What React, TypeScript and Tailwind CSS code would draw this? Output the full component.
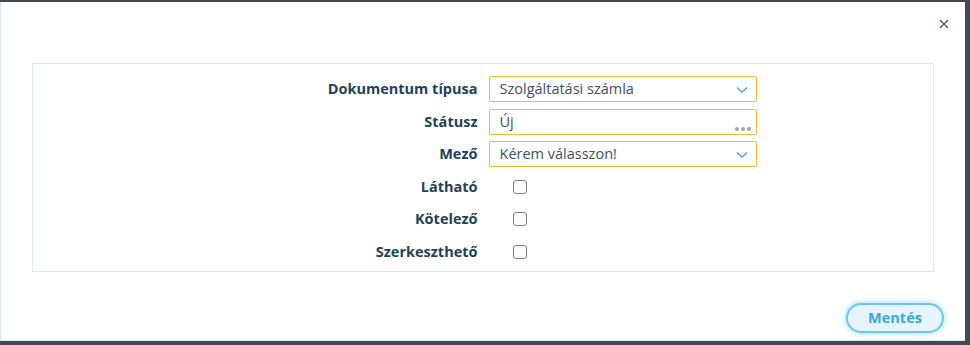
import React from "react"

const font = { fontFamily: '"Open Sans", "Noto Sans", sans-serif' }

function Chevron() {
  return (
    <svg width="12" height="8" viewBox="0 0 12 8" className="absolute right-[8px] top-[9px]">
      <path d="M1 1.5 L6 6 L11 1.5" fill="none" stroke="#4aa3df" strokeWidth="1.4" />
    </svg>
  )
}

function Dots() {
  return (
    <div className="absolute right-[5px] bottom-[3px] flex gap-[2px]">
      <span className="w-[4px] h-[4px] rounded-full bg-[#9aa5ad]" />
      <span className="w-[4px] h-[4px] rounded-full bg-[#9aa5ad]" />
      <span className="w-[4px] h-[4px] rounded-full bg-[#9aa5ad]" />
    </div>
  )
}

function Field({ value, kind }: { value: string; kind: "select" | "lookup" }) {
  return (
    <div className="relative w-[268px] h-[26px] border border-[#f5b82e] rounded-[2px] bg-white pl-[10px] flex items-center text-[14.5px] text-[#3d5260]">
      {value}
      {kind === "select" ? <Chevron /> : <Dots />}
    </div>
  )
}

function Checkbox() {
  return <div className="ml-[24px] w-[14px] h-[14px] rounded-[3px] border border-[#7a7a7a] bg-white" />
}

export default function App() {
  const inputs = [
    { label: "Dokumentum típusa", value: "Szolgáltatási számla", kind: "select" as const },
    { label: "Státusz", value: "Új", kind: "lookup" as const },
    { label: "Mező", value: "Kérem válasszon!", kind: "select" as const },
  ]
  const checks = ["Látható", "Kötelező", "Szerkeszthető"]

  return (
    <div className="w-[970px] h-[345px] bg-[#3e4b52] pt-[2px]" style={font}>
      <div className="w-[965px] h-[339px] bg-white border-l border-b border-[#dbe5ee] flex flex-col">
        <div className="h-[61px] flex justify-end pr-[14px] pt-[15px]">
          <svg width="14" height="14" viewBox="0 0 14 14">
            <path d="M3 3 L11 11 M11 3 L3 11" stroke="#3f5966" strokeWidth="1.3" />
          </svg>
        </div>
        <div className="mx-[31px] border border-[#dfe6ec] pt-[12px] pb-[6px] grid grid-cols-2 gap-x-[11px] gap-y-[6.5px]">
          {inputs.map((r) => (
            <React.Fragment key={r.label}>
              <div className="h-[26px] flex items-center justify-end text-[14.5px] font-bold text-[#1f4256]">{r.label}</div>
              <div className="h-[26px] flex items-center">
                <Field value={r.value} kind={r.kind} />
              </div>
            </React.Fragment>
          ))}
          {checks.map((c) => (
            <React.Fragment key={c}>
              <div className="h-[26px] flex items-center justify-end text-[14.5px] font-bold text-[#1f4256]">{c}</div>
              <div className="h-[26px] flex items-center">
                <Checkbox />
              </div>
            </React.Fragment>
          ))}
        </div>
        <div className="flex justify-end pr-[21px] pt-[31px]">
          <button className="w-[98px] h-[30px] rounded-full border-2 border-[#6cc6f2] bg-[#e6f5fd] text-[#3aa6de] font-bold text-[14.5px] shadow-[0_0_6px_rgba(90,190,240,0.6)]">
            Mentés
          </button>
        </div>
      </div>
    </div>
  )
}
